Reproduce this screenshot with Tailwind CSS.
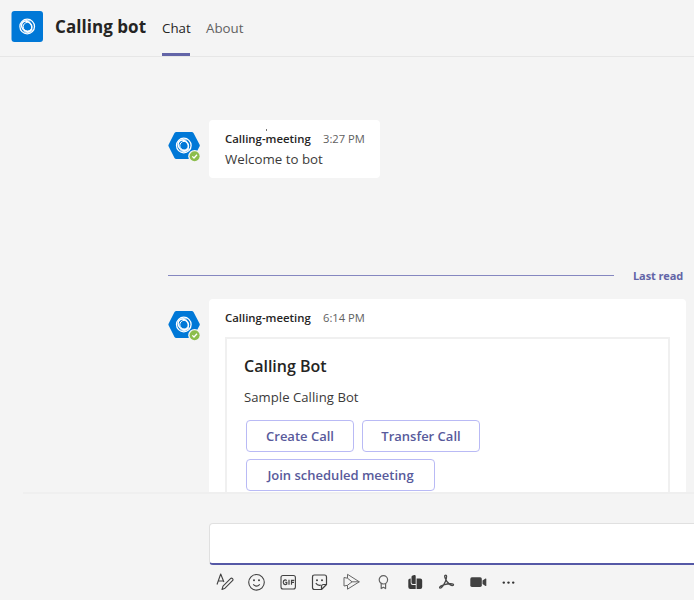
<!DOCTYPE html>
<html lang="en">
<head>
<meta charset="utf-8">
<title>Calling bot</title>
<script src="https://cdn.jsdelivr.net/npm/@tailwindcss/browser@4"></script>
</head>
<body class="bg-[#f4f4f4]">
<svg class="hidden">
  <defs>
    <g id="swirl" fill="none" stroke="#fff">
      <circle r="7.300" stroke-width="1.300"/>
      <ellipse rx="5.700" ry="4.700" cx="-.4" cy=".3" transform="rotate(48)" stroke-width="1.400"/>
      <circle r="4.300" cx=".3" cy=".2" stroke-width="1"/>
      <path d="M-5.500-3.800Q-2-7.500 3-5.500M5.600 3.500Q2 7.500-3.500 5.200" stroke-width=".9"/>
    </g>
    <g id="avatar">
      <path d="M8.500 3h15.200q1.200 0 1.800 1l6 11.600q.6 1 0 2l-6 11.400q-.6 1-1.800 1H8.300q-1.200 0-1.800-1L.7 17.600q-.6-1 0-2L6.500 4q.6-1 2-1z" fill="#0078d7"/>
      <use href="#swirl" transform="translate(15.800 16.500)"/>
      <circle cx="26.600" cy="27.300" r="6.400" fill="#f4f4f4"/>
      <circle cx="26.600" cy="27.300" r="5" fill="#8cbd4c"/>
      <path d="m24.300 27.400 1.700 1.600 3-3.200" fill="none" stroke="#fff" stroke-width="1.300"/>
    </g>
  </defs>
</svg>
<div class="w-[694px] h-[600px] overflow-hidden flex flex-col font-['Open_Sans',sans-serif] text-[#252423] whitespace-nowrap">
  <header class="h-[57px] shrink-0 border-b border-[#e6e6e6] flex pl-[11px]">
    <svg class="mt-[11px] w-8 h-8 shrink-0" viewBox="0 0 32 32"><rect x=".5" width="31.500" height="31" rx="3" fill="#0078d7"/><use href="#swirl" transform="translate(16.200 15.500)"/></svg>
    <h1 class="ml-3 w-[107px] pt-[15px] text-[17px] leading-6 font-bold tracking-[0.05px]">Calling bot</h1>
    <nav class="flex text-[13.300px] leading-5">
      <a class="w-7 mr-4 pt-[18px] border-b-3 border-[#6264a7]">Chat</a>
      <a class="pt-[18px] text-[#616161]">About</a>
    </nav>
  </header>
  <main class="h-[435px] shrink-0 overflow-hidden pl-[168px] pt-[63px]">
    <div class="flex">
      <svg class="w-8 h-9 mt-[9px] mr-[9px] shrink-0" viewBox="0 0 32 36"><use href="#avatar"/></svg>
      <div class="relative w-[171px] h-[58px] bg-white rounded pl-4 pt-[11px]">
        <i class="absolute left-[57px] top-[9px] w-px h-[2px] bg-[#777]"></i>
        <div class="flex text-[11.400px] leading-4"><b class="w-[98px] font-semibold">Calling-meeting</b><span class="text-[#616161] text-[11.200px]">3:27 PM</span></div>
        <p class="mt-[2px] text-[13.300px] leading-5 text-[#3b3a39]">Welcome to bot</p>
      </div>
    </div>
    <div class="mt-[87px] h-5 flex items-center">
      <div class="w-[446px] mr-[19px] h-px bg-[#8587c0]"></div>
      <span class="text-[11px] leading-5 pt-px font-bold text-[#6264a7] tracking-[-0.1px]">Last read</span>
    </div>
    <div class="flex mt-[14px]">
      <svg class="w-8 h-9 mt-[9px] mr-[9px] shrink-0" viewBox="0 0 32 36"><use href="#avatar"/></svg>
      <div class="w-[477px] h-[240px] bg-white rounded pl-4 pt-[11px]">
        <div class="flex text-[11.400px] leading-4"><b class="w-[98px] font-semibold">Calling-meeting</b><span class="text-[#616161] text-[11.200px]">6:14 PM</span></div>
        <section class="mt-[11px] w-[445px] h-[190px] border-2 border-[#f0f0f0] pl-[17px] pt-[15px]">
          <h2 class="text-[16px] leading-6 font-semibold">Calling Bot</h2>
          <p class="mt-[9px] text-[13.100px] leading-5 text-[#3b3a39] tracking-[0.05px]">Sample Calling Bot</p>
          <div class="flex flex-wrap gap-x-2 gap-y-[7px] mt-[13px] ml-[2px] w-[300px] text-[13px] font-semibold text-[#585a9b]">
            <button class="w-[108px] h-8 border border-[#b9baf5] rounded pt-px">Create Call</button>
            <button class="w-[118px] h-8 border border-[#b9baf5] rounded pt-px">Transfer Call</button>
            <button class="w-[189px] h-8 border border-[#b9baf5] rounded pt-px">Join scheduled meeting</button>
          </div>
        </section>
      </div>
    </div>
  </main>
  <footer class="grow">
    <div class="ml-[23px] h-[2px] bg-[#efefef]"></div>
    <div class="ml-[209px] mt-[29px] w-[500px] h-[42px] bg-white border border-b-2 border-[#e0e0e0] border-b-[#5558a6] rounded"></div>
    <div class="ml-[216px] mt-[8px] flex">
      <svg class="w-[18px] h-[18px] mr-[14px]" viewBox="0 0 18 18" fill="none" stroke="#424242" stroke-width="1.100" stroke-linejoin="round"><path d="M1 11.500 4.700 1l3.200 8M2.300 8h4.600M6 16.500l1-3.300 7.500-7.500q1-1 2 0t0 2L9 15.200z"/></svg>
      <svg class="w-[18px] h-[18px] mr-[14px]" viewBox="0 0 18 18" fill="none" stroke="#424242" stroke-width="1.100"><circle cx="8.500" cy="9.300" r="7.800"/><path d="M5.200 11.300q3.300 3.600 6.600 0"/><g fill="#424242" stroke="none"><circle cx="6" cy="7.300" r="1"/><circle cx="11" cy="7.300" r="1"/></g></svg>
      <svg class="w-[18px] h-[18px] mr-[13px]" viewBox="0 0 18 18" fill="none" stroke="#424242" stroke-width="1.100"><rect x="1" y="2.500" width="14.400" height="13.500" rx="2"/><path stroke-width="1.200" d="M6.700 7.600q-1-1-2.200-.5-1.300.6-1.200 2.300.2 2 1.800 2.200 1.100 0 1.700-.6V9.400H5.300M9 6.800v4.900M11.500 11.700V7.300h2.800M11.500 9.400h2.500"/></svg>
      <svg class="w-[18px] h-[18px] mr-[14px]" viewBox="0 0 18 18" fill="none" stroke="#424242" stroke-width="1.200" stroke-linejoin="round"><path d="M3.500 2h10q2 0 2 2v7.500L10.500 16.500h-7q-2 0-2-2V4q0-2 2-2zM15.500 11.500h-3q-2 0-2 2v3M4.800 10.200q1.700 2.600 5 2"/><g fill="#424242" stroke="none"><circle cx="6" cy="7.300" r="1"/><circle cx="11" cy="7.300" r="1"/></g></svg>
      <svg class="w-[18px] h-[18px] mr-[15px]" viewBox="0 0 18 18" fill="none" stroke="#666" stroke-width="1" stroke-linejoin="round"><path d="M4.500 5.200V1.300L16.300 8.800 4.500 16.200v-3.900M8.500 8.800h7.800M1 4.500l3.500.7 4.500 3.600-4.500 3.500L1 13z"/></svg>
      <svg class="w-[18px] h-[18px] mr-[14px]" viewBox="0 0 18 18" fill="none" stroke="#616161" stroke-width="1.200" stroke-linejoin="round"><circle cx="7.400" cy="6.800" r="4.200"/><path d="M5.200 10.500V15.600l2.200-1.300 2.200 1.300V10.500"/></svg>
      <svg class="w-[18px] h-[18px] mr-[12px]" viewBox="0 0 18 18" fill="#3a3a3a"><path d="M3.500 4q0-1.200 1.200-1.500l1.600-.4q1.400-.2 1.400 1.100v7.900H5.300q-1.800 0-1.800-1.700zM.3 7.300q0-1.400 1.200-1.500l1.200-.2V10q0 2 2 2.100h3V15.900H2.300Q.3 15.900.3 13.900zM8.600 5.600h3.600q2 0 2 2v6.300q0 2-2 2H8.600z"/></svg>
      <svg class="w-[18px] h-[18px] mr-[14px]" viewBox="0 0 18 18" fill="none" stroke="#484848" stroke-width="1.300" stroke-linejoin="round"><path d="M6.800 2.600q1.700-1 1.800.7-.1 2.800-1.300 5.500-1.700 3.800-4 6-1.700 1-1.700-.5.500-1.500 4-2.500 4-1.200 8.500-1 2 .3 1.200 1.500-1.200.8-3.300-.7Q8.200 8.800 7 4.800q-.5-1.500-.2-2.200z"/></svg>
      <svg class="w-[18px] h-[18px] mr-[14px]" viewBox="0 0 18 18" fill="#424242"><rect x=".3" y="4.300" width="11.500" height="9.600" rx="1.600"/><path d="m12.500 7.500 3-2q.8-.4.8.5v6.400q0 .9-.8.5l-3-2z"/></svg>
      <svg class="w-[18px] h-[18px]" viewBox="0 0 18 18" fill="#333"><circle cx="1.800" cy="9.600" r="1.200"/><circle cx="6.500" cy="9.600" r="1.200"/><circle cx="11.200" cy="9.600" r="1.200"/></svg>
    </div>
  </footer>
</div>
</body>
</html>
